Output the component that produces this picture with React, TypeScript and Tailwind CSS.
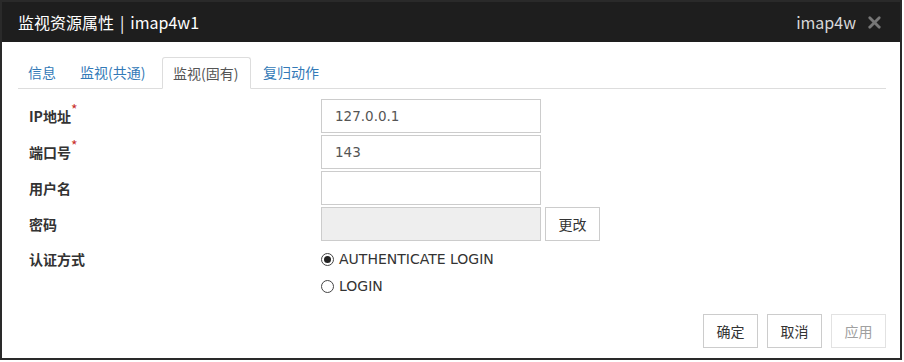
import { X } from 'lucide-react'

const font = { fontFamily: '"Noto Sans CJK SC", "Liberation Sans", sans-serif' }
const latin = { fontFamily: '"DejaVu Sans", "Noto Sans CJK SC", sans-serif' }

const tabs = [
  { label: '信息', w: 'w-[50px]' },
  { label: '监视(共通)', w: 'w-[90px]' },
  { label: '监视(固有)', w: 'w-[89px]', active: true },
  { label: '复归动作', w: 'w-[80px]' }
]

function Label({ text, required }: { text: string; required?: boolean }): React.JSX.Element {
  return (
    <div className="w-[303px] pl-[11px] text-[14px] font-bold text-[#333]">
      {text}
      {required && <sup className="text-[#c9302c] text-[14px] font-normal">*</sup>}
    </div>
  )
}

function Radio({ checked, label }: { checked?: boolean; label: string }): React.JSX.Element {
  return (
    <div className="flex items-center h-[27px] gap-[5px] text-[#333]">
      <span className="w-[13px] h-[13px] rounded-full border border-[#444] flex items-center justify-center">
        {checked && <span className="w-[7px] h-[7px] rounded-full bg-[#222]" />}
      </span>
      <span style={latin} className="text-[14px]">{label}</span>
    </div>
  )
}

export default function App(): React.JSX.Element {
  return (
    <div style={font} className="w-[904px] h-[362px] bg-white">
      <div className="w-[902px] h-[360px] border-2 border-[#2a2a2a] flex flex-col">
        {/* Title bar */}
        <div className="h-[40px] bg-[#1e1e1e] flex items-center justify-between pl-[16px] pr-[16px] shrink-0">
          <span className="text-white text-[16px]">
            监视资源属性<span className="mx-[6px]">|</span>imap4w1
          </span>
          <div className="flex items-center gap-[9px]">
            <span className="text-[#d8d8d8] text-[16px]">imap4w</span>
            <X className="w-[19px] h-[19px] text-[#777]" strokeWidth={3.5} />
          </div>
        </div>

        {/* Tabs */}
        <div className="mt-[15px] ml-[16px] w-[868px] flex border-b border-[#ddd] h-[32px]">
          {tabs.map((t) => (
            <div
              key={t.label}
              className={
                t.active
                  ? `${t.w} mr-[2px] px-[10px] flex items-center text-[14px] text-[#555] bg-white border border-[#ddd] border-b-white rounded-t-[3px] -mb-px`
                  : `${t.w} mr-[2px] px-[10px] flex items-center text-[14px] text-[#337ab7]`
              }
            >
              {t.label}
            </div>
          ))}
        </div>

        {/* Form */}
        <div className="mt-[10px] flex flex-col gap-[2px] pl-[16px]">
          <div className="flex items-center">
            <Label text="IP地址" required />
            <div style={latin} className="w-[220px] h-[34px] border border-[#ccc] px-[13px] flex items-center text-[13.5px] text-[#555]">
              127.0.0.1
            </div>
          </div>
          <div className="flex items-center">
            <Label text="端口号" required />
            <div style={latin} className="w-[220px] h-[34px] border border-[#ccc] px-[13px] flex items-center text-[13.5px] text-[#555]">
              143
            </div>
          </div>
          <div className="flex items-center">
            <Label text="用户名" />
            <div className="w-[220px] h-[34px] border border-[#ccc]" />
          </div>
          <div className="flex items-center">
            <Label text="密码" />
            <div className="w-[220px] h-[34px] border border-[#ccc] bg-[#eee]" />
            <div className="ml-[4px] w-[55px] h-[34px] border border-[#ccc] flex items-center justify-center text-[14px] text-[#333]">
              更改
            </div>
          </div>
          <div className="flex items-start mt-[3px]">
            <div className="h-[27px] flex items-center">
              <Label text="认证方式" />
            </div>
            <div className="flex flex-col">
              <Radio checked label="AUTHENTICATE LOGIN" />
              <Radio label="LOGIN" />
            </div>
          </div>
        </div>

        {/* Footer buttons */}
        <div className="mt-auto mb-[10px] mr-[14px] flex justify-end gap-[9px]">
          <div className="w-[55px] h-[34px] border border-[#ccc] flex items-center justify-center text-[14px] text-[#333]">确定</div>
          <div className="w-[55px] h-[34px] border border-[#ccc] flex items-center justify-center text-[14px] text-[#333]">取消</div>
          <div className="w-[55px] h-[34px] border border-[#e2e2e2] flex items-center justify-center text-[14px] text-[#a0a0a0]">应用</div>
        </div>
      </div>
    </div>
  )
}
